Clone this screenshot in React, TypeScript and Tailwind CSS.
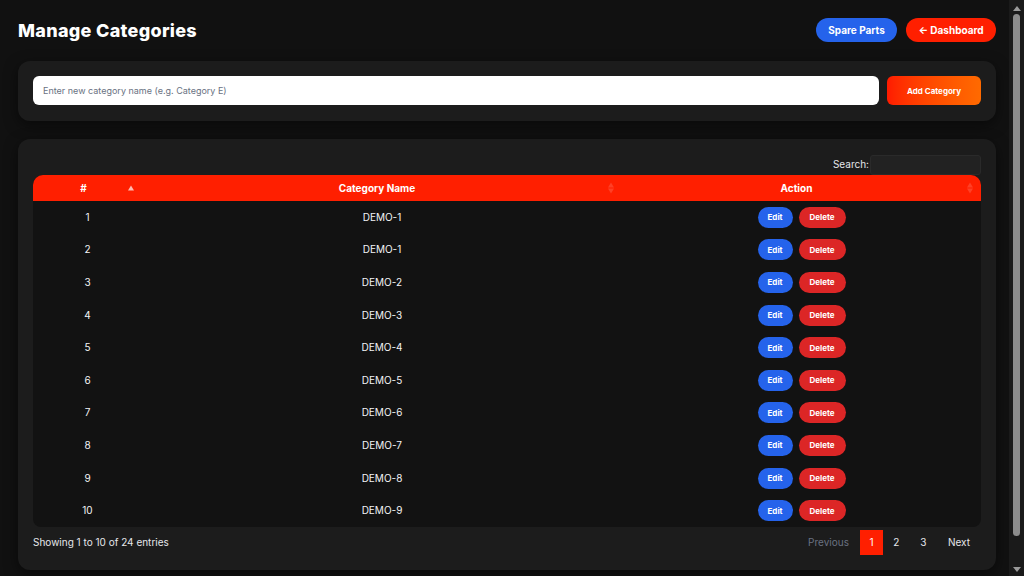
import React from 'react'

const rows = [
  { id: 1, name: 'DEMO-1' },
  { id: 2, name: 'DEMO-1' },
  { id: 3, name: 'DEMO-2' },
  { id: 4, name: 'DEMO-3' },
  { id: 5, name: 'DEMO-4' },
  { id: 6, name: 'DEMO-5' },
  { id: 7, name: 'DEMO-6' },
  { id: 8, name: 'DEMO-7' },
  { id: 9, name: 'DEMO-8' },
  { id: 10, name: 'DEMO-9' },
]

function SortMark({ active }: { active?: boolean }) {
  return (
    <span className="absolute right-[8px] top-1/2 -translate-y-1/2 flex flex-col items-center gap-[1px]">
      <span
        className={`block w-0 h-0 border-l-[3px] border-r-[3px] border-b-[5px] border-l-transparent border-r-transparent ${active ? 'border-b-white/70' : 'border-b-white/15'}`}
      />
      {!active && (
        <span className="block w-0 h-0 border-l-[3px] border-r-[3px] border-t-[5px] border-l-transparent border-r-transparent border-t-white/15" />
      )}
    </span>
  )
}

export default function App() {
  return (
    <div className="flex bg-[#111111] text-white" style={{ fontFamily: 'Inter, "Open Sans", sans-serif' }}>
      <div className="flex-1 pl-[18px] pr-[13px] pt-[17px] pb-[18px]">
        {/* Header */}
        <div className="flex items-center justify-between h-[26px]">
          <h1 className="text-[18px] font-extrabold tracking-[0.3px]">Manage Categories</h1>
          <div className="flex items-center gap-[9px]">
            <button className="h-[24px] w-[81px] rounded-full bg-[#2563eb] text-[10px] font-bold">
              Spare Parts
            </button>
            <button className="h-[24px] w-[90px] rounded-full bg-[#ff1f00] text-[10px] font-bold">
              ← Dashboard
            </button>
          </div>
        </div>

        {/* Add form */}
        <div className="mt-[18px] bg-[#1c1c1c] rounded-[12px] px-[15px] pt-[15px] pb-[16px] flex items-center gap-[8px] shadow-[0_4px_14px_rgba(0,0,0,0.5)]">
          <input
            className="flex-1 h-[29px] rounded-[6px] bg-white px-[10px] text-[9px] text-gray-700 placeholder:text-gray-500 outline-none"
            placeholder="Enter new category name (e.g. Category E)"
          />
          <button className="h-[29px] w-[94px] rounded-[6px] bg-gradient-to-r from-[#ff1a00] to-[#ff6a00] text-[8px] font-bold">
            Add Category
          </button>
        </div>

        {/* Table card */}
        <div className="mt-[18px] bg-[#1c1c1c] rounded-[12px] px-[15px] pt-[15px] pb-[15px] shadow-[0_4px_14px_rgba(0,0,0,0.5)]">
          <div className="flex justify-end items-center gap-[1px] h-[21px]">
            <span className="text-[10px] text-gray-200">Search:</span>
            <input className="w-[111px] h-[20px] rounded-[3px] bg-[#222222] border border-[#2a2a2a] outline-none" />
          </div>

          <div className="rounded-t-[10px] rounded-b-[8px] overflow-hidden bg-[#121212]">
            <div className="grid grid-cols-[109px_480px_1fr] h-[26px] bg-[#ff1f00] text-[10px] font-bold items-center">
              <div className="relative h-full flex items-center justify-center pr-[8px]">
                #
                <SortMark active />
              </div>
              <div className="relative h-full flex items-center justify-center pr-[10px]">
                Category Name
                <SortMark />
              </div>
              <div className="relative h-full flex items-center justify-center pr-[10px]">
                Action
                <SortMark />
              </div>
            </div>
            {rows.map((r) => (
              <div key={r.id} className="grid grid-cols-[109px_480px_1fr] h-[32.6px] items-center text-[10px] text-gray-100">
                <div className="text-center">{r.id}</div>
                <div className="text-center">{r.name}</div>
                <div className="flex items-center justify-center gap-[6px]">
                  <button className="h-[21px] w-[35px] rounded-full bg-[#2563eb] text-[8px] font-bold text-white">
                    Edit
                  </button>
                  <button className="h-[21px] w-[47px] rounded-full bg-[#dc2626] text-[8px] font-bold text-white">
                    Delete
                  </button>
                </div>
              </div>
            ))}
          </div>

          <div className="flex items-center justify-between mt-[3px] h-[25px]">
            <span className="text-[10px] text-gray-200">Showing 1 to 10 of 24 entries</span>
            <div className="flex items-center text-[10px]">
              <span className="px-[11px] text-gray-500">Previous</span>
              <span className="w-[23px] h-[25px] flex items-center justify-center bg-[#ff1f00] text-white">1</span>
              <span className="w-[27px] h-[25px] flex items-center justify-center text-gray-200">2</span>
              <span className="w-[27px] h-[25px] flex items-center justify-center text-gray-200">3</span>
              <span className="px-[11px] text-gray-200">Next</span>
            </div>
          </div>
        </div>
      </div>

      {/* Scrollbar */}
      <div className="w-[15px] h-[576px] bg-[#1a1a1a] flex flex-col items-center pt-[6px] pb-[4px] shrink-0">
        <span className="block w-0 h-0 border-l-[4px] border-r-[4px] border-b-[5px] border-l-transparent border-r-transparent border-b-[#9a9a9a]" />
        <div className="mt-[3px] w-[7px] h-[522px] rounded-full bg-[#8c8c8c]" />
        <div className="flex-1" />
        <span className="block w-0 h-0 border-l-[4px] border-r-[4px] border-t-[5px] border-l-transparent border-r-transparent border-t-[#9a9a9a]" />
      </div>
    </div>
  )
}
